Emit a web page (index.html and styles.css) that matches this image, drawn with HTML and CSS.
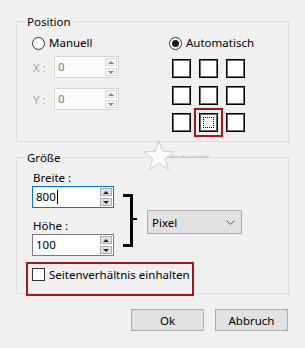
FILE: index.html
```html
<!DOCTYPE html>
<html lang="de">
<head>
<meta charset="utf-8">
<title>Position / Größe</title>
<link rel="stylesheet" href="styles.css">
</head>
<body>
<div class="dialog">
  <fieldset class="group group-position">
    <legend>Position</legend>
    <div class="pos-body">
      <div class="pos-left">
        <div class="radio"><span class="radio-circle"></span><span>Manuell</span></div>
        <div class="coord-row">
          <span class="coord-label">X :</span>
          <div class="spin spin-coord disabled">
            <span class="spin-val">0</span>
            <span class="spin-btns"><span class="spin-btn up"></span><span class="spin-btn down"></span></span>
          </div>
        </div>
        <div class="coord-row">
          <span class="coord-label">Y :</span>
          <div class="spin spin-coord disabled">
            <span class="spin-val">0</span>
            <span class="spin-btns"><span class="spin-btn up"></span><span class="spin-btn down"></span></span>
          </div>
        </div>
      </div>
      <div class="pos-right">
        <div class="radio checked"><span class="radio-circle"></span><span>Automatisch</span></div>
        <div class="anchor-grid">
          <span class="cell"></span><span class="cell"></span><span class="cell"></span>
          <span class="cell"></span><span class="cell"></span><span class="cell"></span>
          <span class="cell"></span><span class="cell focus"><span class="hl hl-cell"></span></span><span class="cell"></span>
        </div>
      </div>
    </div>
  </fieldset>

  <fieldset class="group group-size">
    <legend>Größe</legend>
    <div class="size-body">
      <div class="size-row">
        <div class="size-fields">
          <div class="field-label">Breite :</div>
          <div class="spin spin-size focused">
            <span class="spin-val">800<span class="caret"></span></span>
            <span class="spin-btns"><span class="spin-btn up"></span><span class="spin-btn down"></span></span>
          </div>
          <div class="field-label second">Höhe :</div>
          <div class="spin spin-size">
            <span class="spin-val">100</span>
            <span class="spin-btns"><span class="spin-btn up"></span><span class="spin-btn down"></span></span>
          </div>
        </div>
        <svg class="bracket" viewBox="0 0 15 53" width="15" height="53">
          <rect x="0" y="0" width="10" height="3" fill="#000"/>
          <rect x="7" y="0" width="3" height="53" fill="#000"/>
          <rect x="0" y="50" width="10" height="3" fill="#000"/>
          <rect x="10" y="24" width="4" height="2" fill="#000"/>
        </svg>
        <div class="select">
          <span>Pixel</span>
          <svg class="chevron" viewBox="0 0 9 5" width="9" height="5"><polyline points="0.5,0.5 4.5,4.5 8.5,0.5" fill="none" stroke="#555" stroke-width="1"/></svg>
        </div>
      </div>
      <div class="check">
        <span class="check-box"></span><span>Seitenverhältnis einhalten</span>
        <span class="hl hl-check"></span>
      </div>
    </div>
  </fieldset>

  <div class="buttons">
    <button class="btn" type="button">Ok</button>
    <button class="btn" type="button">Abbruch</button>
  </div>

  <div class="watermark">
    <svg class="wm-star" viewBox="0 0 32 32" width="32" height="32">
      <polygon points="16,1 19.8,11.5 31,11.8 22.2,18.6 25.4,29.5 16,23.2 6.6,29.5 9.8,18.6 1,11.8 12.2,11.5" fill="#fafafa" stroke="#c4c4c4" stroke-width="0.8"/>
    </svg>
    <span class="wm-text">cafe-cd-tutorials.de</span>
  </div>
</div>
</body>
</html>
```

FILE: styles.css
```css
body {
  margin: 0;
  background: #f0f0f0;
  font-family: "Noto Sans", "DejaVu Sans", sans-serif;
  font-size: 11.5px;
  color: #000;
}

.dialog {
  position: relative;
  width: 305px;
  height: 348px;
  box-sizing: border-box;
  padding: 13px 16px 0;
}

.group {
  margin: 0;
  padding: 0;
  border: 1px solid #dcdcdc;
  min-width: 0;
}

.group legend {
  margin-left: 8px;
  padding: 0 2px;
  height: 17px;
  line-height: 17px;
}

.group-size {
  margin-top: 7px;
}

/* Position */
.pos-body {
  display: flex;
  padding: 5px 0 9px 15px;
}

.pos-left {
  width: 137px;
}

.pos-right {
  flex: 1;
}

.radio {
  display: flex;
  align-items: center;
  gap: 4px;
  height: 16px;
  line-height: 16px;
}

.radio-circle {
  width: 13px;
  height: 13px;
  box-sizing: border-box;
  border: 1px solid #333;
  border-radius: 50%;
  background: #fff;
  display: flex;
  align-items: center;
  justify-content: center;
  flex: none;
}

.radio.checked .radio-circle::after {
  content: "";
  width: 7px;
  height: 7px;
  border-radius: 50%;
  background: #1a1a1a;
}

.coord-row {
  display: flex;
  align-items: center;
  margin-top: 5px;
}

.coord-row + .coord-row {
  margin-top: 10px;
}

.coord-label {
  width: 21px;
  padding-left: 1px;
  color: #a8a8a8;
}

.spin {
  display: flex;
  box-sizing: border-box;
  height: 22px;
  border: 1px solid #7a7a7a;
  background: #fff;
}

.spin-coord {
  width: 65px;
}

.spin.disabled {
  border-color: #d6d6d6;
  background: #fcfcfc;
  color: #7a7a7a;
}

.spin.focused {
  border-color: #0078d7;
}

.spin-val {
  flex: 1;
  padding-left: 3px;
  line-height: 20px;
  display: flex;
  align-items: center;
}

.caret {
  width: 1px;
  height: 14px;
  background: #000;
  margin-left: 1px;
}

.spin-btns {
  display: flex;
  flex-direction: column;
  gap: 2px;
  width: 12px;
  padding: 1px 1px 1px 0;
}

.spin-btn {
  flex: 1;
  box-sizing: border-box;
  border: 1px solid #adadad;
  background: #e1e1e1;
  display: flex;
  align-items: center;
  justify-content: center;
}

.spin.disabled .spin-btn {
  border-color: #d9d9d9;
  background: #f2f2f2;
}

.spin-btn::after {
  content: "";
  border-left: 3px solid transparent;
  border-right: 3px solid transparent;
}

.spin-btn.up::after {
  border-bottom: 3px solid #222;
}

.spin-btn.down::after {
  border-top: 3px solid #222;
}

.spin.disabled .spin-btn.up::after {
  border-bottom-color: #8a8a8a;
}

.spin.disabled .spin-btn.down::after {
  border-top-color: #8a8a8a;
}

.anchor-grid {
  display: grid;
  grid-template-columns: repeat(3, 19px);
  gap: 8px;
  margin: 8px 0 0 3px;
}

.cell {
  position: relative;
  width: 19px;
  height: 19px;
  box-sizing: border-box;
  border: 1px solid #000;
  box-shadow: inset 0 0 0 1px #6a6a6a;
  background: #fff;
}

.cell.focus::before {
  content: "";
  position: absolute;
  inset: 3px;
  border: 1px dotted #000;
}

.hl {
  position: absolute;
  box-sizing: border-box;
  border: 2px solid #a3161c;
}

.hl-cell {
  left: -6px;
  top: -6px;
  width: 29px;
  height: 29px;
  box-shadow: 0 0 2px rgba(220, 120, 120, 0.4);
}

/* Größe */
.size-body {
  padding: 4px 0 11px 15px;
}

.size-row {
  display: flex;
  align-items: flex-start;
}

.size-fields {
  width: 82px;
}

.field-label {
  line-height: 16px;
  padding-left: 1px;
}

.field-label.second {
  margin-top: 10px;
}

.spin-size {
  width: 82px;
}

.bracket {
  display: block;
  margin: 24px 0 0 9px;
  flex: none;
}

.select {
  margin: 40px 0 0 9px;
  width: 95px;
  height: 24px;
  box-sizing: border-box;
  border: 1px solid #adadad;
  background: #e1e1e1;
  display: flex;
  align-items: center;
  justify-content: space-between;
  padding: 0 6px 0 4px;
}

.chevron {
  display: block;
}

.check {
  position: relative;
  display: flex;
  align-items: center;
  gap: 4px;
  height: 16px;
  margin-top: 10px;
}

.check-box {
  width: 13px;
  height: 13px;
  box-sizing: border-box;
  border: 1px solid #333;
  background: #fff;
  flex: none;
}

.hl-check {
  left: -6px;
  top: -4px;
  width: 168px;
  height: 34px;
}

/* Buttons */
.buttons {
  display: flex;
  justify-content: flex-end;
  gap: 11px;
  margin-top: 15px;
  padding-right: 1px;
}

.btn {
  width: 73px;
  height: 22px;
  box-sizing: border-box;
  border: 1px solid #adadad;
  background: #e1e1e1;
  font: inherit;
  color: #000;
  padding: 0;
}

/* Watermark */
.watermark {
  position: absolute;
  left: 143px;
  top: 140px;
  display: flex;
  align-items: center;
  pointer-events: none;
}

.wm-star {
  display: block;
}

.wm-text {
  margin-left: -6px;
  margin-top: 1px;
  font-size: 4px;
  line-height: 5px;
  color: #a0a0a0;
  letter-spacing: 0.2px;
}
```
